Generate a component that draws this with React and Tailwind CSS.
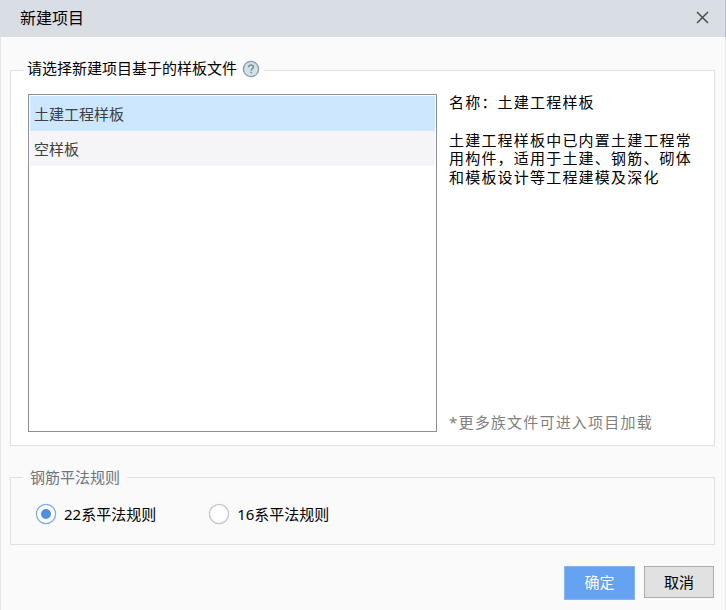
// src/NewProjectDialog.jsx
import React, { useState } from 'react';

const templates = [
  {
    id: 'civil',
    name: '土建工程样板',
    lines: ['土建工程样板中已内置土建工程常', '用构件，适用于土建、钢筋、砌体', '和模板设计等工程建模及深化'],
  },
  { id: 'empty', name: '空样板', lines: [] },
];

const rules = [
  { id: '22', label: '22系平法规则' },
  { id: '16', label: '16系平法规则' },
];

function HelpIcon() {
  return (
    <svg width="18" height="18" viewBox="0 0 18 18" fill="none">
      <circle cx="9" cy="9" r="7.6" fill="#d3e0e8" stroke="#8a9fad" strokeWidth="1.4" />
      <path
        d="M6.6 7.2C6.6 5.7 7.6 4.9 9 4.9s2.4.8 2.4 2.1c0 1.6-2.3 1.7-2.3 3.5"
        stroke="#7890a1"
        strokeWidth="1.5"
      />
      <rect x="8.3" y="11.7" width="1.6" height="1.6" fill="#7890a1" />
    </svg>
  );
}

function Radio({ checked }) {
  return (
    <svg width="22" height="22" viewBox="0 0 22 22">
      <circle cx="11" cy="11" r="9.6" fill="#fff" stroke={checked ? '#7eaeea' : '#c6c6c6'} strokeWidth="1.3" />
      {checked && <circle cx="11" cy="11" r="5" fill="#4f90de" />}
    </svg>
  );
}

export default function App() {
  const [selected, setSelected] = useState('civil');
  const [rule, setRule] = useState('22');
  const current = templates.find((t) => t.id === selected);

  return (
    <div
      lang="zh-CN"
      className="flex h-[610px] w-[726px] flex-col overflow-hidden bg-[#fafafa] font-['Noto_Sans','Noto_Sans_CJK_SC',sans-serif] text-[15px] text-black"
    >
      {/* Title bar */}
      <header className="flex h-[37px] shrink-0 items-center justify-between border-r border-[#b9bcc2] bg-[#d9dde4] pr-4 pl-5">
        <h1 className="mt-[-2px] text-base leading-6">新建项目</h1>
        <button type="button" aria-label="关闭" className="mt-[-2px]">
          <svg width="13" height="13" viewBox="0 0 13 13" stroke="#4c4c4c" strokeWidth="1.5">
            <path d="M1 1l11 11M12 1L1 12" />
          </svg>
        </button>
      </header>

      <main className="flex flex-1 flex-col border-x border-[#e6e6e6] pr-[10px] pl-[9px]">
        {/* Template selection */}
        <fieldset className="mt-[20px] h-[389px] min-w-0 border border-[#e0e0e0] bg-white pr-[10px] pl-[13px]">
          <legend className="flex h-[26px] items-center gap-[5px] pr-1 pl-[3px] leading-[22px]">
            <span className="mt-[-5px]">请选择新建项目基于的样板文件</span>
            <span className="mt-[-3px]">
              <HelpIcon />
            </span>
          </legend>
          <div className="mt-[11px] ml-[4px] flex gap-3">
            <ul className="h-[338px] w-[409px] shrink-0 border border-[#8b8f98] bg-white p-px">
              {templates.map((t, i) => (
                <li
                  key={t.id}
                  onClick={() => setSelected(t.id)}
                  className={`flex h-[35px] items-center px-1 pt-0.5 text-[#404040] ${
                    t.id === selected ? 'bg-[#cce7ff]' : i % 2 ? 'bg-[#f5f5f8]' : ''
                  }`}
                >
                  {t.name}
                </li>
              ))}
            </ul>
            <div className="flex flex-1 flex-col text-[15px] leading-[18.7px] tracking-[1.2px] whitespace-nowrap">
              <p className="mt-[-1px]">名称：{current.name}</p>
              <div className="mt-[19px]">
                {current.lines.map((line) => (
                  <p key={line}>{line}</p>
                ))}
              </div>
              <p className="mt-auto text-[#808080]">*更多族文件可进入项目加载</p>
            </div>
          </div>
        </fieldset>

        {/* Rebar rules */}
        <fieldset className="mt-[20px] h-[79px] min-w-0 border border-[#e0e0e0] pl-3">
          <legend className="px-[7px] leading-[22px] text-[#6e7580]">钢筋平法规则</legend>
          <div className="mt-[15px] ml-3 flex gap-[52px]">
            {rules.map((r) => (
              <button
                key={r.id}
                type="button"
                onClick={() => setRule(r.id)}
                className="flex h-[22px] items-center gap-[7px] leading-[22px]"
              >
                <Radio checked={rule === r.id} />
                {r.label}
              </button>
            ))}
          </div>
        </fieldset>

        {/* Actions */}
        <div className="mt-[21px] mr-px flex items-start justify-end gap-[9px]">
          <button type="button" className="h-[34px] w-[71px] border border-[#83b4f6] bg-[#65a2f2] pb-0.5 text-white">
            确定
          </button>
          <button type="button" className="h-8 w-[70px] border border-[#adadad] bg-[#e1e1e1]">
            取消
          </button>
        </div>
      </main>
    </div>
  );
}
